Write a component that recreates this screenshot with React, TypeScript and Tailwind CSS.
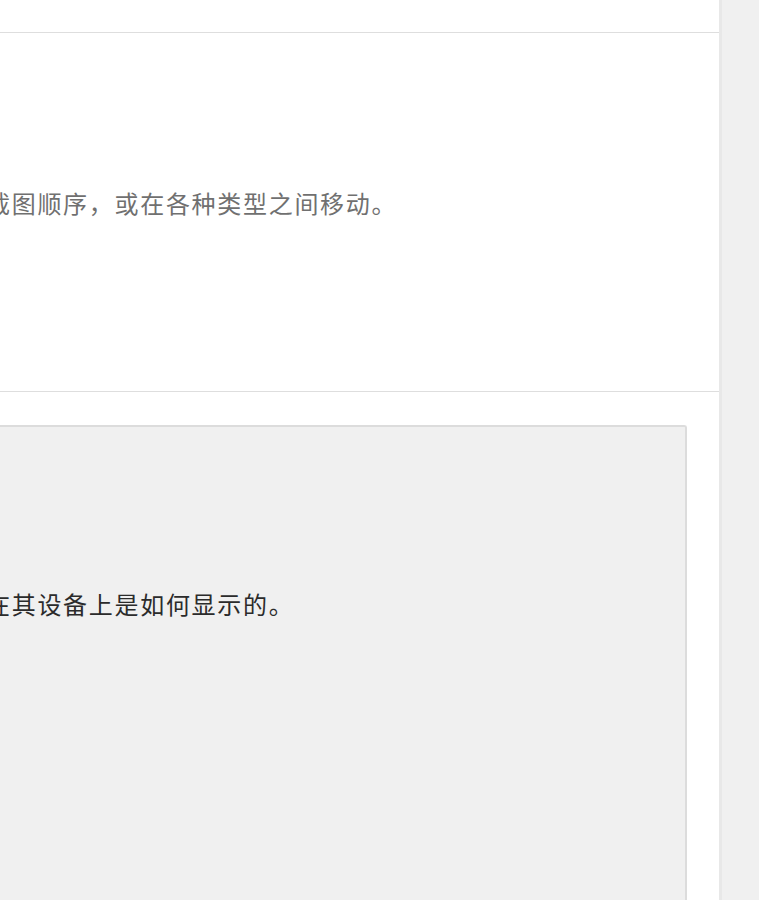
export default function App() {
    return (
        <div className="flex h-[900px] overflow-hidden bg-white font-['Noto_Sans_CJK_SC','Noto_Sans',sans-serif]">
            <main className="w-[719px] shrink-0 flex flex-col overflow-hidden">
                {/* Previous section (cut off) */}
                <div className="h-[33px] shrink-0 border-b border-[#dedede]" />

                {/* Screenshot section */}
                <section className="h-[359px] shrink-0 border-b border-[#dedede] flex items-center overflow-hidden">
                    <p className="-ml-[14px] -mt-[18px] whitespace-nowrap text-[24px] leading-[32px] tracking-[1.7px] text-[#707070]">
                        截图顺序，或在各种类型之间移动。
                    </p>
                </section>

                {/* Preview box */}
                <div className="flex-1 pt-[33px] pr-[32px]">
                    <div className="h-full rounded-tr-[3px] border-t-2 border-r-2 border-[#dcdcdc] bg-[#f0f0f0] pt-[161px] overflow-hidden">
                        <p className="-ml-[14px] whitespace-nowrap text-[24px] leading-[32px] tracking-[1.7px] text-[#2b2b2b]">
                            在其设备上是如何显示的。
                        </p>
                    </div>
                </div>
            </main>
            <aside className="flex-1 border-l-[3px] border-[#e8e8e8] bg-[#f0f0f0]" />
        </div>
    );
}
